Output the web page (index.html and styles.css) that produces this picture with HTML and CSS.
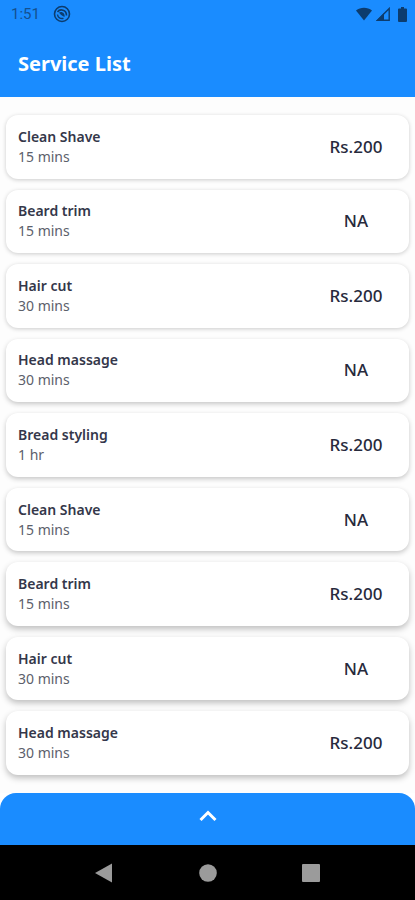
FILE: index.html
```html
<!DOCTYPE html>
<html lang="en">
<head>
<meta charset="utf-8">
<meta name="viewport" content="width=device-width, initial-scale=1">
<title>Service List</title>
<link rel="stylesheet" href="styles.css">
</head>
<body>
<header class="header">
  <div class="status">
    <span class="time">1:51</span>
    <svg viewBox="0 0 18 18" width="18" height="18" aria-hidden="true">
      <circle cx="9" cy="9" r="7.500" fill="none" stroke="currentColor" stroke-width="1.600"/>
      <path d="M4.500 7C7 3.500 13.500 4.500 13.500 10.500" fill="none" stroke="currentColor" stroke-width="1.600"/>
      <path d="M6 7.500C9 5.800 12.300 8.500 11.500 12C10 11.500 7 9.500 6 7.500z" fill="currentColor"/>
      <path d="M4.500 9.500C4.800 12.500 7.500 14.200 10.500 13.300" fill="none" stroke="currentColor" stroke-width="1.400"/>
    </svg>
    <span class="signals">
      <svg viewBox="0 0 16 14" width="16" height="14" aria-hidden="true"><path d="M0 3.500C4.500-.3 11.500-.3 16 3.500L8 13.500z" fill="currentColor"/></svg>
      <svg viewBox="0 0 14 14" width="14" height="14" aria-hidden="true"><path d="M1.500 13.300L13.200 1.500V13.300z" fill="none" stroke="currentColor" stroke-width="1.400"/><path d="M0 14L8 6V14z" fill="currentColor"/></svg>
      <svg class="battery" viewBox="0 0 9 15" width="9" height="15" aria-hidden="true"><path d="M3 0h3v1.500h2q1 0 1 1V14q0 1-1 1H1q-1 0-1-1V2.500q0-1 1-1h2z" fill="currentColor"/></svg>
    </span>
  </div>
  <h1 class="title">Service List</h1>
</header>
<main class="content">
  <ul class="services">
    <li class="card"><div><h2 class="name">Clean Shave</h2><p class="duration">15 mins</p></div><span class="price">Rs.200</span></li>
    <li class="card"><div><h2 class="name">Beard trim</h2><p class="duration">15 mins</p></div><span class="price">NA</span></li>
    <li class="card"><div><h2 class="name">Hair cut</h2><p class="duration">30 mins</p></div><span class="price">Rs.200</span></li>
    <li class="card"><div><h2 class="name">Head massage</h2><p class="duration">30 mins</p></div><span class="price">NA</span></li>
    <li class="card"><div><h2 class="name">Bread styling</h2><p class="duration">1 hr</p></div><span class="price">Rs.200</span></li>
    <li class="card"><div><h2 class="name">Clean Shave</h2><p class="duration">15 mins</p></div><span class="price">NA</span></li>
    <li class="card"><div><h2 class="name">Beard trim</h2><p class="duration">15 mins</p></div><span class="price">Rs.200</span></li>
    <li class="card"><div><h2 class="name">Hair cut</h2><p class="duration">30 mins</p></div><span class="price">NA</span></li>
    <li class="card"><div><h2 class="name">Head massage</h2><p class="duration">30 mins</p></div><span class="price">Rs.200</span></li>
  </ul>
</main>
<button class="sheet" type="button" aria-label="Expand">
  <svg viewBox="0 0 18 12" width="18" height="12" aria-hidden="true"><path d="M1.500 10L9 2.500L16.500 10" fill="none" stroke="currentColor" stroke-width="3"/></svg>
</button>
<nav class="system-nav">
  <button class="nav-button" type="button" aria-label="Back"><svg viewBox="0 0 18 20" width="18" height="20"><path d="M0 10L17 .5V19.500z" fill="currentColor"/></svg></button>
  <button class="nav-button" type="button" aria-label="Home"><svg viewBox="0 0 18 18" width="18" height="18"><circle cx="9" cy="9" r="8.800" fill="currentColor"/></svg></button>
  <button class="nav-button" type="button" aria-label="Recent apps"><svg viewBox="0 0 18 18" width="18" height="18"><rect width="18" height="18" rx="1" fill="currentColor"/></svg></button>
</nav>
</body>
</html>
```
FILE: styles.css
```css
* {
  box-sizing: border-box;
}

body {
  display: flex;
  flex-direction: column;
  min-height: 100vh;
  margin: 0;
  background: #fff;
  color: #272a3c;
  font-family: "Noto Sans", "Open Sans", sans-serif;
}

h1, h2, p, ul {
  margin: 0;
  padding: 0;
}

svg {
  display: block;
}

button {
  border: 0;
  padding: 0;
}

.header {
  background: #1a8cff;
  padding-bottom: 19px;
}

.status {
  display: flex;
  align-items: center;
  gap: 13px;
  height: 28px;
  padding: 0 8px 0 11px;
  color: #0c3c6e;
}

.time {
  color: #14508f;
  font: 15px/20px Roboto, sans-serif;
}

.signals {
  display: flex;
  align-items: center;
  gap: 4px;
  margin-left: auto;
}

.battery {
  margin-left: 4px;
}

.title {
  padding: 21px 18px 0;
  color: #fff;
  font-size: 20px;
  font-weight: 700;
  line-height: 29px;
}

.content {
  display: flex;
  flex: 1;
  padding: 18px 6px;
  background: #fdfdfd;
}

.services {
  display: grid;
  flex: 1;
  grid-auto-rows: 1fr;
  gap: 11px;
  list-style: none;
}

.card {
  display: flex;
  align-items: center;
  justify-content: space-between;
  padding: 10px 11px 10px 12px;
  border-radius: 12px;
  background: #fff;
  box-shadow: 0 1px 4px rgba(0, 0, 0, 0.2);
}

.card:nth-child(n + 4) {
  box-shadow: 0 2px 5px rgba(0, 0, 0, 0.22);
}

.card:nth-child(n + 7) {
  box-shadow: 0 3px 6px rgba(0, 0, 0, 0.25);
}

.name {
  color: #34374a;
  font-size: 14px;
  font-weight: 600;
  line-height: 20px;
}

.duration {
  color: #5c606b;
  font-size: 14px;
  line-height: 20px;
}

.price {
  width: 84px;
  font-size: 17px;
  font-weight: 500;
  line-height: 22px;
  text-align: center;
}

.sheet {
  display: flex;
  align-items: flex-start;
  justify-content: center;
  height: 52px;
  padding-top: 17px;
  border-radius: 16px 16px 0 0;
  background: #1a8cff;
  color: #fff;
}

.system-nav {
  display: flex;
  justify-content: center;
  gap: calc(25% - 18px);
  height: 55px;
  background: #000;
}

.nav-button {
  display: flex;
  align-items: center;
  justify-content: center;
  width: 18px;
  background: none;
  color: #9b9b9b;
}
```
